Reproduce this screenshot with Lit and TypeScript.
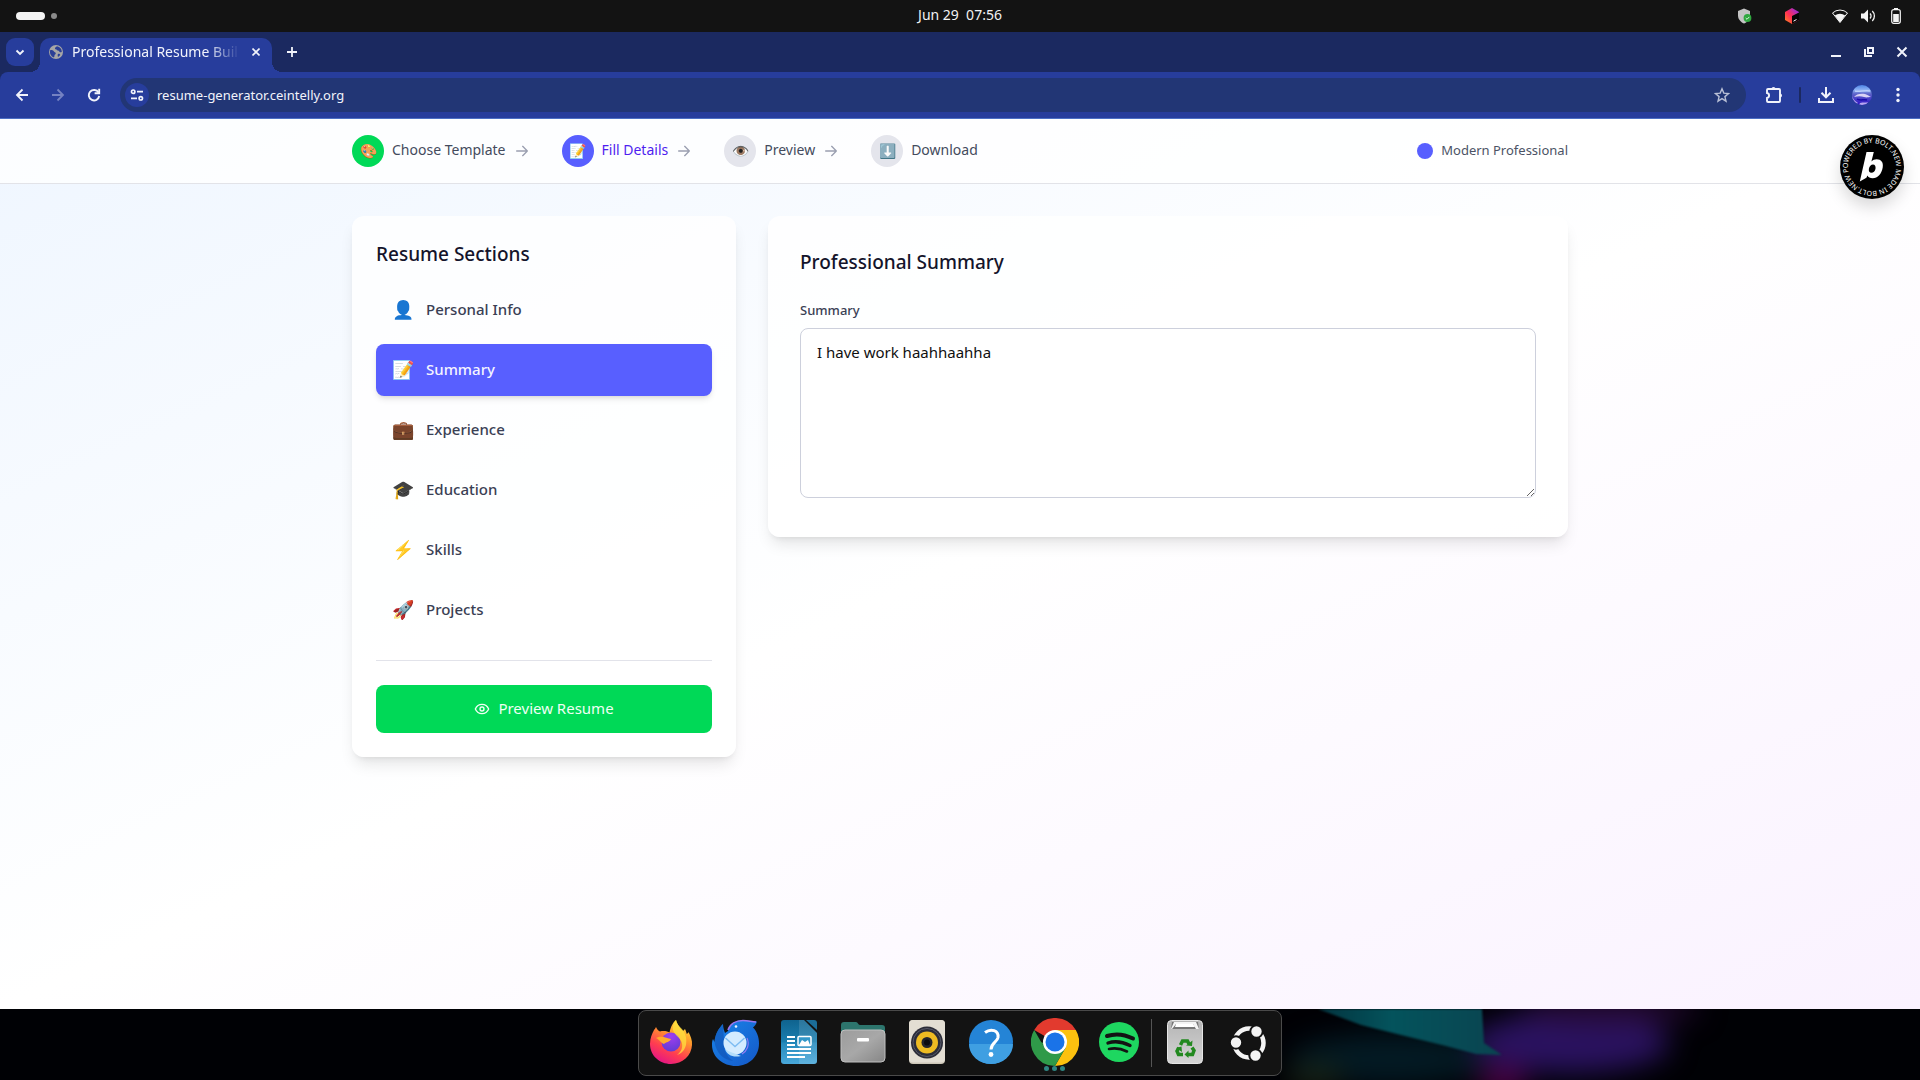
import { LitElement, html, css, svg, nothing } from "lit";
import { customElement, state } from "lit/decorators.js";
import { classMap } from "lit/directives/class-map.js";

const uiFont = css`"Noto Sans", "Open Sans", sans-serif`;

/* ---------- Desktop top bar ---------- */

@customElement("desktop-bar")
class DesktopBar extends LitElement {
  static styles = css`
    :host {
      display: grid;
      grid-template-columns: 1fr auto 1fr;
      align-items: center;
      height: 32px;
      padding: 0 16px;
      box-sizing: border-box;
      background: #131313;
      color: #f2f2f2;
      font: 14px/20px ${uiFont};
    }
    .spaces { display: flex; align-items: center; gap: 6px; }
    .current { width: 29px; height: 8px; border-radius: 4px; background: #f4f4f4; }
    .other { width: 6px; height: 6px; border-radius: 3px; background: #8a8a8a; }
    .clock { white-space: pre; padding-bottom: 2px; }
    .tray { display: flex; align-items: center; justify-content: flex-end; gap: 12px; }
    .apps { display: flex; gap: 32px; margin-right: 20px; }
    svg { display: block; }
  `;
  render() {
    return html`
      <div class="spaces"><span class="current"></span><span class="other"></span></div>
      <time class="clock">Jun 29  07:56</time>
      <div class="tray">
        <div class="apps">
          <svg width="16" height="16" viewBox="0 0 16 16">
            <path d="M8 0.500 14 3v4.500c0 3.800-2.600 6.500-6 8-3.400-1.500-6-4.200-6-8V3z" fill="#c4c4c4" />
            <circle cx="11.500" cy="10" r="3.900" fill="#2fa83f" />
            <path d="m9.700 10 1.300 1.300 2.300-2.400" fill="none" stroke="#dff5e0" stroke-width="1" />
          </svg>
          <svg width="16" height="16" viewBox="0 0 16 16">
            <defs>
              <linearGradient id="cube" x1="0" y1="1" x2="1" y2="0">
                <stop offset="0" stop-color="#ff8a1e" />
                <stop offset=".45" stop-color="#ff2d55" />
                <stop offset="1" stop-color="#7a2cff" />
              </linearGradient>
            </defs>
            <path d="M8 0 15 4v8l-7 4-7-4V4z" fill="url(#cube)" />
            <path d="m8 8 7-3.500V12l-7 4z" fill="#050505" />
            <path d="m9.500 13.200 3-1.700" stroke="#fff" stroke-width="1" />
          </svg>
        </div>
        <svg width="16" height="16" viewBox="0 0 16 16">
          <path d="M0.500 5a11 11 0 0 1 15 0L8 14.500z" fill="none" stroke="#f4f4f4" stroke-width="1" />
          <path d="M2.800 7.600a8 8 0 0 1 10.400 0L8 14.500z" fill="#f4f4f4" />
        </svg>
        <svg width="16" height="16" viewBox="0 0 16 16">
          <path d="M1 5.500h3L8 1.500v13l-4-4H1z" fill="#f4f4f4" />
          <path d="M10 5.500a3.500 3.500 0 0 1 0 5M12.300 3a7 7 0 0 1 0 10" fill="none" stroke="#f4f4f4" stroke-width="1.300" />
        </svg>
        <svg width="16" height="16" viewBox="0 0 16 16">
          <rect x="3.700" y="1.700" width="8.600" height="13.600" rx="2" fill="none" stroke="#f4f4f4" stroke-width="1.200" />
          <rect x="6" y="0" width="4" height="2" fill="#f4f4f4" />
          <rect x="5.200" y="6" width="5.600" height="8" fill="#f4f4f4" />
        </svg>
      </div>
    `;
  }
}

/* ---------- Browser window chrome ---------- */

@customElement("browser-chrome")
class BrowserChrome extends LitElement {
  static styles = css`
    :host {
      display: block;
      background: #1b2960;
      color: #f1f3fb;
      font: 14px/20px ${uiFont};
    }
    button {
      display: grid;
      place-items: center;
      border: 0;
      padding: 0;
      background: none;
      color: inherit;
      cursor: pointer;
    }
    svg { display: block; }
    .tabs { display: flex; align-items: center; height: 40px; padding: 0 6px; }
    .search { width: 28px; height: 28px; border-radius: 9px; background: #273d9c; }
    .tab {
      position: relative;
      display: flex;
      align-items: center;
      align-self: flex-end;
      box-sizing: border-box;
      width: 232px;
      height: 34px;
      margin-left: 6px;
      padding: 0 6px 6px 9px;
      border-radius: 10px 10px 0 0;
      background: #273d9c;
    }
    .tab::before, .tab::after {
      content: "";
      position: absolute;
      bottom: 0;
      width: 10px;
      height: 10px;
    }
    .tab::before { left: -10px; background: radial-gradient(circle at 0 0, transparent 10px, #273d9c 10px); }
    .tab::after { right: -10px; background: radial-gradient(circle at 100% 0, transparent 10px, #273d9c 10px); }
    .title {
      flex: 1;
      margin-left: 9px;
      white-space: nowrap;
      mask-image: linear-gradient(to right, #000 80%, transparent);
    }
    .close { width: 20px; height: 20px; margin-left: 6px; }
    .new { width: 28px; height: 28px; margin-left: 6px; }
    .window { display: flex; gap: 17px; margin-left: auto; padding-right: 4px; }
    .window button { width: 16px; height: 16px; }
    .toolbar {
      display: flex;
      align-items: center;
      height: 46px;
      padding: 0 11px;
      border-bottom: 1px solid #4c6fc4;
      border-radius: 8px 8px 0 0;
      background: #273d9c;
    }
    .nav { display: flex; gap: 14px; margin-right: 15px; }
    .nav button { width: 22px; height: 22px; }
    .nav .off { color: #7582c2; }
    .omnibox {
      flex: 1;
      display: flex;
      align-items: center;
      height: 34px;
      padding: 0 16px 0 5px;
      border-radius: 17px;
      background: #223675;
    }
    .site { width: 24px; height: 24px; border-radius: 12px; background: #273d9c; }
    .url {
      flex: 1;
      min-width: 0;
      margin-left: 8px;
      padding: 0;
      border: 0;
      outline: 0;
      background: none;
      color: inherit;
      font: inherit;
      font-size: 13px;
    }
    .star { color: #b9c0d6; }
    .tools { display: flex; align-items: center; gap: 14px; margin-left: 17px; }
    .tools button { width: 22px; height: 22px; }
    .rule { width: 2px; height: 16px; border-radius: 1px; background: #1b2960; }
  `;
  render() {
    return html`
      <div class="tabs">
        <button class="search" aria-label="Search tabs">
          <svg width="10" height="10" viewBox="0 0 10 10"><path d="m1.500 3.500 3.500 3.500 3.500-3.500" fill="none" stroke="currentColor" stroke-width="1.900" /></svg>
        </button>
        <div class="tab">
          <svg width="14" height="14" viewBox="0 0 14 14">
            <circle cx="7" cy="7" r="7" fill="#a6a6a6" />
            <path d="M1.300 5c1.500 0 3.200.300 3.700 1.400.4 1 1.800.5 1.800 1.900s-1.400 1-1.300 2.200c0 .9-.3 1.700-.6 2.100A6 6 0 0 1 1.300 5zM8 1.200c-1 1-2.300 1.300-2 2.500.3 1 2 .5 2.400 1.600.3.900 1.700.2 1.900 1.200.1 1 1.200.8 2.500.5A6 6 0 0 0 8 1.200zM9.500 8.700c1 0 1.800.5 1.700 1.300-.5.800-1.200 1.500-2.200 2-.5-1.200-.5-3 .5-3.300z" fill="#2b3f96" />
          </svg>
          <span class="title">Professional Resume Buil</span>
          <button class="close" aria-label="Close tab">
            <svg width="8" height="8" viewBox="0 0 8 8"><path d="m0.500 0.500 7 7m0-7-7 7" stroke="currentColor" stroke-width="1.600" /></svg>
          </button>
        </div>
        <button class="new" aria-label="New tab">
          <svg width="12" height="12" viewBox="0 0 12 12"><path d="M6 1v10M1 6h10" stroke="currentColor" stroke-width="1.800" /></svg>
        </button>
        <div class="window">
          <button aria-label="Minimize">
            <svg width="16" height="16" viewBox="0 0 16 16"><path d="M3 12h10" stroke="currentColor" stroke-width="2" /></svg>
          </button>
          <button aria-label="Restore">
            <svg width="16" height="16" viewBox="0 0 16 16"><path d="M7 4h5v5H7zM4 5v7h7" fill="none" stroke="currentColor" stroke-width="2" /></svg>
          </button>
          <button aria-label="Close window">
            <svg width="16" height="16" viewBox="0 0 16 16"><path d="m3.500 3.500 9 9m0-9-9 9" stroke="currentColor" stroke-width="2" /></svg>
          </button>
        </div>
      </div>
      <div class="toolbar">
        <div class="nav">
          <button aria-label="Back">
            <svg width="14" height="14" viewBox="0 0 14 14"><path d="M13 7H2m5.500-5.500L2 7l5.500 5.500" fill="none" stroke="currentColor" stroke-width="1.800" /></svg>
          </button>
          <button class="off" aria-label="Forward">
            <svg width="14" height="14" viewBox="0 0 14 14"><path d="M1 7h11M6.500 1.500 12 7l-5.500 5.500" fill="none" stroke="currentColor" stroke-width="1.800" /></svg>
          </button>
          <button aria-label="Reload">
            <svg width="14" height="14" viewBox="0 0 14 14"><path d="M11.500 4.500A5.200 5.200 0 1 0 12.200 8" fill="none" stroke="currentColor" stroke-width="1.900" /><path d="M12.200 0.800v4.500H7.600" fill="none" stroke="currentColor" stroke-width="1.900" /></svg>
          </button>
        </div>
        <div class="omnibox">
          <button class="site" aria-label="View site information">
            <svg width="14" height="14" viewBox="0 0 14 14" fill="none" stroke="currentColor" stroke-width="1.700"><circle cx="3.200" cy="3.700" r="1.700" /><path d="M7 3.700h6M1 10.300h6" /><circle cx="10.800" cy="10.300" r="1.700" /></svg>
          </button>
          <input class="url" type="text" aria-label="Address" value="resume-generator.ceintelly.org" />
          <button class="star" aria-label="Bookmark this page">
            <svg width="16" height="16" viewBox="0 0 16 16"><path d="m8 1.800 1.800 4.300 4.700.400-3.600 3.100 1.100 4.600L8 11.700l-4 2.500 1.100-4.600L1.500 6.500l4.700-.4z" fill="none" stroke="currentColor" stroke-width="1.400" /></svg>
          </button>
        </div>
        <div class="tools">
          <button aria-label="Extensions">
            <svg width="18" height="18" viewBox="0 0 18 18"><path d="M2 4a1 1 0 0 1 1-1h11a1 1 0 0 1 1 1v11a1 1 0 0 1-1 1H3a1 1 0 0 1-1-1v-3c2.800-.5 2.800-4.500 0-5z" fill="none" stroke="currentColor" stroke-width="1.900" /><path d="M6.500 3a2 2 0 0 1 4 0zM15 7.500a2 2 0 0 1 0 4z" fill="currentColor" /></svg>
          </button>
          <span class="rule"></span>
          <button aria-label="Downloads">
            <svg width="18" height="18" viewBox="0 0 18 18" fill="none" stroke="currentColor" stroke-width="2"><path d="M9 1v10M4.500 6.800 9 11.300l4.500-4.500M2 12v4h14v-4" /></svg>
          </button>
          <button aria-label="Profile">
            <svg width="20" height="20" viewBox="0 0 20 20">
              <defs>
                <linearGradient id="sky" x1="0" y1="0" x2="0" y2="1">
                  <stop offset="0" stop-color="#4d84e6" />
                  <stop offset=".25" stop-color="#8fb4f5" />
                  <stop offset=".45" stop-color="#5d62c8" />
                  <stop offset="1" stop-color="#2c0fc5" />
                </linearGradient>
                <clipPath id="round"><circle cx="10" cy="10" r="10" /></clipPath>
              </defs>
              <g clip-path="url(#round)">
                <path d="M0 0h20v20H0z" fill="url(#sky)" />
                <path d="M3 6c4 1 10-1 15 0" stroke="#bcd0fb" stroke-width="1.500" fill="none" />
                <path d="M2 12c2-3 7-4 11-3 3 1 4 2 6 3-3 0-4 1-7 0s-6-1-10 0z" fill="#d9d2f5" />
                <path d="M0 11c1 3 3 5 6 7l-3 2H0zM8 18c3-1 6 0 8-1l-2 3H7z" fill="#b7a8ee" />
                <path d="M5 14c3 2 7 0 10 1" stroke="#1a0aa8" stroke-width="1.500" fill="none" />
              </g>
            </svg>
          </button>
          <button aria-label="Browser menu">
            <svg width="4" height="16" viewBox="0 0 4 16" fill="currentColor"><circle cx="2" cy="2.500" r="1.700" /><circle cx="2" cy="8" r="1.700" /><circle cx="2" cy="13.500" r="1.700" /></svg>
          </button>
        </div>
      </div>
    `;
  }
}

/* ---------- Resume builder page ---------- */

const steps = [
  { icon: "🎨", name: "Choose Template", status: "done" },
  { icon: "📝", name: "Fill Details", status: "active" },
  { icon: "👁️", name: "Preview", status: "" },
  { icon: "⬇️", name: "Download", status: "" },
];

const sections = [
  { icon: "👤", name: "Personal Info" },
  { icon: "📝", name: "Summary" },
  { icon: "💼", name: "Experience" },
  { icon: "🎓", name: "Education" },
  { icon: "⚡", name: "Skills" },
  { icon: "🚀", name: "Projects" },
];

@customElement("resume-page")
class ResumePage extends LitElement {
  @state() private section = "Summary";

  static styles = css`
    :host {
      position: relative;
      display: block;
      background: linear-gradient(to bottom right, #eff6ff, #ffffff, #faf2ff);
      color: #1b1b2b;
      font: 15px/24px ${uiFont};
    }
    * { box-sizing: border-box; }
    button { border: 0; margin: 0; font: inherit; color: inherit; background: none; cursor: pointer; }
    svg { display: block; }
    .inner { max-width: 1280px; margin: 0 auto; padding: 0 32px; }
    header { background: #ffffffcc; border-bottom: 1px solid #e2e3e8; }
    header .inner { display: flex; align-items: center; justify-content: space-between; height: 64px; }
    .steps { display: flex; gap: 32px; margin: 0; padding: 0; list-style: none; }
    .step { display: flex; align-items: center; gap: 8px; font-size: 14px; line-height: 20px; color: #444b5d; }
    .name { padding-bottom: 2px; }
    .badge {
      display: grid;
      place-items: center;
      width: 32px;
      height: 32px;
      border-radius: 16px;
      background: #e4e5ec;
      font-size: 14px;
    }
    .done .badge { background: #00d957; }
    .active .badge { background: #585fff; }
    .active { color: #4f1fef; }
    .arrow { color: #9a9fb0; }
    .template { display: flex; align-items: center; gap: 8px; font-size: 13px; line-height: 20px; color: #4c5365; }
    .swatch { width: 16px; height: 16px; border-radius: 8px; background: #585fff; }
    main { padding: 32px 0; }
    main .inner { display: grid; grid-template-columns: repeat(3, minmax(0, 1fr)); gap: 32px; align-items: start; }
    .card {
      border-radius: 12px;
      background: #ffffffcc;
      box-shadow: 0 10px 15px -3px #0000001a, 0 4px 6px -4px #0000001a;
    }
    .side { padding: 24px; }
    .form { grid-column: span 2; padding: 32px; }
    h2 { margin: 0 0 16px; font-size: 19px; line-height: 28px; font-weight: 500; color: #14142b; }
    .form h2 { margin-bottom: 24px; }
    nav { display: flex; flex-direction: column; gap: 8px; }
    .item {
      display: flex;
      align-items: center;
      gap: 12px;
      height: 52px;
      padding: 0 16px 2px;
      border-radius: 8px;
      font-weight: 500;
      color: #3a4054;
      text-align: left;
    }
    .item.selected { background: #585fff; color: #f4f4ff; box-shadow: 0 4px 6px -1px #0000001a, 0 2px 4px -2px #0000001a; }
    .emoji { width: 22px; font-size: 18px; line-height: 28px; }
    .foot { margin-top: 24px; padding-top: 24px; border-top: 1px solid #e2e3ea; }
    .preview {
      display: flex;
      align-items: center;
      justify-content: center;
      gap: 8px;
      width: 100%;
      height: 48px;
      border-radius: 8px;
      background: #00d957;
      color: #effff4;
    }
    label { display: block; margin-bottom: 8px; font-size: 13px; line-height: 20px; font-weight: 500; color: #3a4054; }
    textarea {
      display: block;
      width: 100%;
      margin-bottom: 7px;
      padding: 11px 16px 13px;
      border: 1px solid #cdd0dc;
      border-radius: 8px;
      outline: 0;
      background: #fff;
      color: #101010;
      font: inherit;
      resize: vertical;
    }
    .bolt {
      position: absolute;
      top: 16px;
      right: 16px;
      width: 64px;
      height: 64px;
      border-radius: 32px;
      box-shadow: 0 8px 16px #00000026;
    }
    .ring { font: 7px ${uiFont}; fill: #fff; }
  `;

  render() {
    return html`
      <header>
        <div class="inner">
          <ol class="steps">
            ${steps.map(
              (s, i) => html`
                <li class=${classMap({ step: true, done: s.status === "done", active: s.status === "active" })}>
                  <span class="badge">${s.icon}</span>
                  <span class="name">${s.name}</span>
                  ${i < steps.length - 1
                    ? html`<svg class="arrow" width="16" height="16" viewBox="0 0 24 24" fill="none" stroke="currentColor" stroke-width="2" stroke-linecap="round" stroke-linejoin="round"><path d="M4 12h16m-7-7 7 7-7 7" /></svg>`
                    : nothing}
                </li>
              `,
            )}
          </ol>
          <div class="template"><span class="swatch"></span><span class="name">Modern Professional</span></div>
        </div>
      </header>
      <main>
        <div class="inner">
          <aside class="card side">
            <h2>Resume Sections</h2>
            <nav>
              ${sections.map(
                (s) => html`
                  <button
                    class=${classMap({ item: true, selected: s.name === this.section })}
                    @click=${() => (this.section = s.name)}
                  >
                    <span class="emoji">${s.icon}</span><span>${s.name}</span>
                  </button>
                `,
              )}
            </nav>
            <div class="foot">
              <button class="preview">
                <svg width="16" height="16" viewBox="0 0 24 24" fill="none" stroke="currentColor" stroke-width="2" stroke-linecap="round" stroke-linejoin="round">
                  <path d="M2 12c1.800-4.300 5.600-7 10-7s8.200 2.700 10 7c-1.800 4.300-5.600 7-10 7s-8.200-2.700-10-7z" />
                  <circle cx="12" cy="12" r="3" />
                </svg>
                <span class="name">Preview Resume</span>
              </button>
            </div>
          </aside>
          <section class="card form">
            <h2>Professional Summary</h2>
            <label for="summary">Summary</label>
            <textarea id="summary" rows="6" .value=${"I have work haahhaahha"}></textarea>
          </section>
        </div>
      </main>
      <a class="bolt" href="#" aria-label="Powered by Bolt.new">
        <svg width="64" height="64" viewBox="0 0 64 64">
          <defs><path id="orbit" d="M8.600 37.500A24 24 0 1 1 55.400 26.500A24 24 0 1 1 8.600 37.500" /></defs>
          <circle cx="32" cy="32" r="32" fill="#000" />
          <text class="ring"><textPath href="#orbit">POWERED BY BOLT.NEW MADE IN BOLT.NEW</textPath></text>
          <path fill="#fff" fill-rule="evenodd" d="M26.500 17h7.300l-2.400 9.500c1.500-1.500 3.200-2.200 5.300-2.200 4.300 0 7 3 6 8.200-1 6.300-5 10.700-10 10.700-2.600 0-4.400-1-5.300-2.800l-1 2.400-6.600 3.700zM33 29.500c-2 0-3.600 1.800-4.100 4.200-.4 2.400.5 4.100 2.500 4.100s3.600-1.700 4.100-4.100c.4-2.400-.5-4.200-2.500-4.200z" />
        </svg>
      </a>
    `;
  }
}

/* ---------- Dock ---------- */

const dockApps = [
  {
    name: "Firefox",
    art: svg`
      <defs>
        <linearGradient id="ffa" x1=".8" y1="0" x2=".3" y2="1"><stop offset="0" stop-color="#ffe83f"/><stop offset=".35" stop-color="#ff9a2b"/><stop offset=".7" stop-color="#ff3d50"/><stop offset="1" stop-color="#e31587"/></linearGradient>
        <radialGradient id="ffb" cx=".5" cy=".2" r=".9"><stop offset="0" stop-color="#a03ef0"/><stop offset="1" stop-color="#5b3bd0"/></radialGradient>
      </defs>
      <path fill="url(#ffa)" d="M7 12c1-1 1.500-2 2-3 1 2 2 3.500 4 4.500 4-1 8 0 9.500 1 1.500-7 4-10.500 6.500-12.500 1 4 3 6 5 9l2 2 2-2c1 2 1.500 4 1.800 5 1.500-1 1.700-2 1.700-2 2 4 4 8 3.500 13C44.500 37.500 35.500 46 24 46S3 37.500 3 26c0-6 2-10 4-14z"/>
      <circle cx="24" cy="24" r="9.500" fill="url(#ffb)"/>
      <path fill="#ffab2e" d="M9 20c5-3 11 0 15 1-1 3-5 3-7 5-3-1-4-4-8-6z"/>
      <path fill="#ffe23f" opacity=".75" d="M29 2c1 4 3 6 6 9 4 5 5 10 4 16-2 7-6 9-9 10 6-4 7-12 2-17-4-4-7-7-6-12 1-3 2-5 3-6z"/>`,
  },
  {
    name: "Thunderbird",
    art: svg`
      <defs><linearGradient id="tb" x1="0" y1="0" x2="1" y2="1"><stop offset="0" stop-color="#1a86ea"/><stop offset="1" stop-color="#1458c8"/></linearGradient></defs>
      <path fill="url(#tb)" d="M17 13C19 6 25 2 32 2c5 0 9 2 14 1.500-1 3-2 4-4 6 4 4 6 10 6 16 0 13-10 22.500-23 22.500S1 39 1 27c0-2 0-4 1-6l1.500 3C4 16 8 10 12 6c0 4 1 6 2 9z"/>
      <path fill="#0f4fae" opacity=".55" d="M12 6C8 10 4 16 3.500 24 5 34 12 42 22 43c-7-5-10-12-9-20z"/>
      <path d="M17 12C19 6 25 2.500 32 2.500c5 0 9 1.500 13 1.500" fill="none" stroke="#9b78f0" stroke-width="1.600"/>
      <path d="M36 20c3 7 0 13-5 16" fill="none" stroke="#8f7ef0" stroke-width="1.200"/>
      <circle cx="25" cy="8.500" r="1.300" fill="#e8f4ff"/>
      <circle cx="24" cy="25" r="11.500" fill="#d4ecff"/>
      <path d="m14.500 20 9.500 8.500 9.500-8.500" fill="none" stroke="#7dbcf2" stroke-width="1.400"/>
      <path fill="#b3ddfa" d="M14 31c4 3 9 4 16 7-8 2-14-1-16-7z"/>`,
  },
  {
    name: "LibreOffice Writer",
    art: svg`
      <defs><linearGradient id="lo" x1="0" y1="0" x2="0" y2="1"><stop offset="0" stop-color="#0f638f"/><stop offset=".5" stop-color="#1a7fb0"/><stop offset=".52" stop-color="#2489bb"/><stop offset="1" stop-color="#49a8da"/></linearGradient></defs>
      <path fill="url(#lo)" d="M9 2h20l13 13v28a3 3 0 0 1-3 3H9a3 3 0 0 1-3-3V5a3 3 0 0 1 3-3z"/>
      <path fill="#1b6d98" d="M31 2h8a3 3 0 0 1 3 3v7z"/>
      <path fill="#fff" opacity=".12" d="M24 2h5l13 13v28a3 3 0 0 1-3 3H24z"/>
      <path stroke="#fff" stroke-width="2" d="M12 19h8m-8 4h8m-8 4h8m-8 4h24m-24 4h24m-24 4h18"/>
      <rect x="23" y="18.500" width="13" height="9" rx="1" fill="#3297c8" stroke="#fff" stroke-width="1.500"/>
      <path fill="#fff" d="m24 27 3-5 3 2 3-2 2 5z"/>`,
  },
  {
    name: "Files",
    art: svg`
      <defs><linearGradient id="fl" x1="0" y1="0" x2="1" y2="1"><stop offset="0" stop-color="#9c9c9c"/><stop offset=".5" stop-color="#a8a8a8"/><stop offset="1" stop-color="#868686"/></linearGradient></defs>
      <path fill="#2d756d" d="M5 4h12c2 0 2 3 4 3h22a3 3 0 0 1 3 3v8H2V7a3 3 0 0 1 3-3z"/>
      <rect x="2" y="12" width="44" height="32" rx="4" fill="url(#fl)" stroke="#c0c0c0"/>
      <rect x="18" y="20" width="12" height="3.500" rx="1" fill="#fff"/>`,
  },
  {
    name: "Rhythmbox",
    art: svg`
      <rect x="6" y="2" width="36" height="44" rx="4" fill="#cdc7b8"/>
      <rect x="6" y="2" width="36" height="42.500" rx="4" fill="#e3ded3"/>
      <circle cx="24" cy="24.500" r="16" fill="#2c2d38"/>
      <circle cx="24" cy="24.500" r="14" fill="none" stroke="#555868"/>
      <circle cx="24" cy="24.500" r="11" fill="#eebb22"/>
      <circle cx="24" cy="24.500" r="5.500" fill="#22232b"/>
      <circle cx="24" cy="24.500" r="3" fill="#0b0b10"/>`,
  },
  {
    name: "Help",
    art: svg`
      <circle cx="24" cy="24" r="22" fill="#2484d6"/>
      <path fill="#3f9fe2" d="M2 26a22 20 0 0 0 44 0z"/>
      <path d="M18 14.500c6-4.500 14-2 13 5-.8 4.500-7 5.500-7 12" fill="none" stroke="#fff" stroke-width="3"/>
      <circle cx="24" cy="36.500" r="2.400" fill="#fff"/>`,
  },
  {
    name: "Chrome",
    running: true,
    art: svg`
      <path fill="#e23a2e" d="M24 24 3.200 12A24 24 0 0 1 44.800 12z"/>
      <path fill="#fcc10f" d="M24 12h20.800A24 24 0 0 1 24 48l10.400-18z"/>
      <path fill="#2f9a49" d="M3.200 12 13.600 30 24 36l-3 .500L24 48A24 24 0 0 1 3.200 12z"/>
      <path fill="#2f9a49" d="m24 48 10.400-18L24 30 10 24z"/>
      <circle cx="24" cy="24" r="12" fill="#fff"/>
      <circle cx="24" cy="24" r="9.500" fill="#1a73e8"/>`,
  },
  {
    name: "Spotify",
    art: svg`
      <circle cx="24" cy="24" r="20" fill="#1ed760"/>
      <path d="M12 18c9-3 18-1.500 26 2.500" fill="none" stroke="#131313" stroke-width="4" stroke-linecap="round"/>
      <path d="M13 25c8-2.500 15-1 22 2.500" fill="none" stroke="#131313" stroke-width="3.400" stroke-linecap="round"/>
      <path d="M14 31c7-1.500 12-.5 18 2.500" fill="none" stroke="#131313" stroke-width="2.600" stroke-linecap="round"/>`,
  },
];

const dockPlaces = [
  {
    name: "Trash",
    art: svg`
      <defs><linearGradient id="tr" x1="0" y1="0" x2="0" y2="1"><stop offset="0" stop-color="#b5b5b5"/><stop offset="1" stop-color="#d4d4d4"/></linearGradient></defs>
      <rect x="6.500" y="2.500" width="35" height="43" rx="4" fill="url(#tr)" stroke="#e6e6e6"/>
      <path fill="#777" d="M11 4h26l1 7H10z"/><path fill="#f4f4f4" d="M13 4h22l3 7h-3l-3-5H15l-4 5h-1z"/><path fill="#fff" d="M15 6h17l2 3H14z"/>
      <g fill="none" stroke="#22891f" stroke-width="3.500"><path d="m19.500 27 2-4h5l1.500 3"/><path d="m31 29.500 2 3-1.500 4H27"/><path d="M22 36.500h-4.500l-1.500-3.500 2-3.500"/></g>
      <path fill="#22891f" d="m25 27.500 6 .5.500-5.500zM27.500 32.500l-4 4 4 3.500zM15 30l5.500-1.500.5 5.500z"/>`,
  },
  {
    name: "Show apps",
    art: svg`
      <circle cx="24" cy="25" r="14.500" fill="none" stroke="#f4f4f4" stroke-width="4.500"/>
      <g fill="#f4f4f4" stroke="#131313" stroke-width="2"><circle cx="11" cy="24.500" r="6.200"/><circle cx="31.500" cy="13.500" r="6.200"/><circle cx="30.500" cy="37.500" r="6.200"/></g>`,
  },
];

@customElement("desktop-dock")
class DesktopDock extends LitElement {
  static styles = css`
    :host {
      position: relative;
      display: flex;
      justify-content: center;
      padding: 1px 0 4px;
      overflow: hidden;
      background: #000105;
    }
    .wall { position: absolute; top: 0; right: 0; height: 100%; width: 640px; }
    .panel {
      position: relative;
      display: flex;
      align-items: center;
      border: 1px solid #4a4a4a;
      border-radius: 8px;
      background: #131313;
    }
    .app {
      position: relative;
      display: grid;
      place-items: center;
      box-sizing: border-box;
      width: 64px;
      height: 64px;
      border: 0;
      padding: 0 0 2px;
      background: none;
      cursor: pointer;
    }
    .line { width: 1px; height: 48px; margin-right: 1px; background: #555; }
    .dots { position: absolute; bottom: 4px; left: 21px; display: flex; gap: 3px; }
    .dots i { width: 5px; height: 5px; border-radius: 3px; background: #2f8582; }
  `;
  private item(app: { name: string; art: unknown; running?: boolean }) {
    return html`
      <button class="app" aria-label=${app.name}>
        <svg width="48" height="48" viewBox="0 0 48 48">${app.art}</svg>
        ${app.running ? html`<span class="dots"><i></i><i></i><i></i></span>` : nothing}
      </button>
    `;
  }
  render() {
    return html`
      <svg class="wall" viewBox="0 0 640 71" preserveAspectRatio="xMaxYMid slice">
        <defs>
          <filter id="soft" x="-100%" y="-150%" width="300%" height="400%" color-interpolation-filters="sRGB"><feGaussianBlur stdDeviation="14" /></filter>
          <filter id="edge" color-interpolation-filters="sRGB"><feGaussianBlur stdDeviation="1" /></filter>
          <linearGradient id="teal" x1="0" x2="1"><stop offset="0" stop-color="#03343f" /><stop offset=".4" stop-color="#04535c" /><stop offset="1" stop-color="#0a4450" /></linearGradient>
        </defs>
        <g filter="url(#soft)">
          <ellipse cx="110" cy="50" rx="100" ry="26" fill="#031a24" />
          <ellipse cx="35" cy="68" rx="30" ry="12" fill="#1a2414" />
          <ellipse cx="290" cy="34" rx="100" ry="30" fill="#2a1260" />
          <ellipse cx="330" cy="0" rx="90" ry="14" fill="#260a34" />
          <ellipse cx="222" cy="72" rx="26" ry="16" fill="#4a0040" />
        </g>
        <path filter="url(#edge)" fill="url(#teal)" d="M38 0h164l2 34 18 12-26-1-30-8-45-11-40-10z" />
      </svg>
      <div class="panel">
        ${dockApps.map((a) => this.item(a))}
        <span class="line"></span>
        ${dockPlaces.map((a) => this.item(a))}
      </div>
    `;
  }
}

@customElement("app-root")
class AppRoot extends LitElement {
  static styles = css`
    :host { display: flex; flex-direction: column; min-height: 100vh; }
    resume-page { flex: 1; }
  `;
  render() {
    return html`
      <desktop-bar></desktop-bar>
      <browser-chrome></browser-chrome>
      <resume-page></resume-page>
      <desktop-dock></desktop-dock>
    `;
  }
}
